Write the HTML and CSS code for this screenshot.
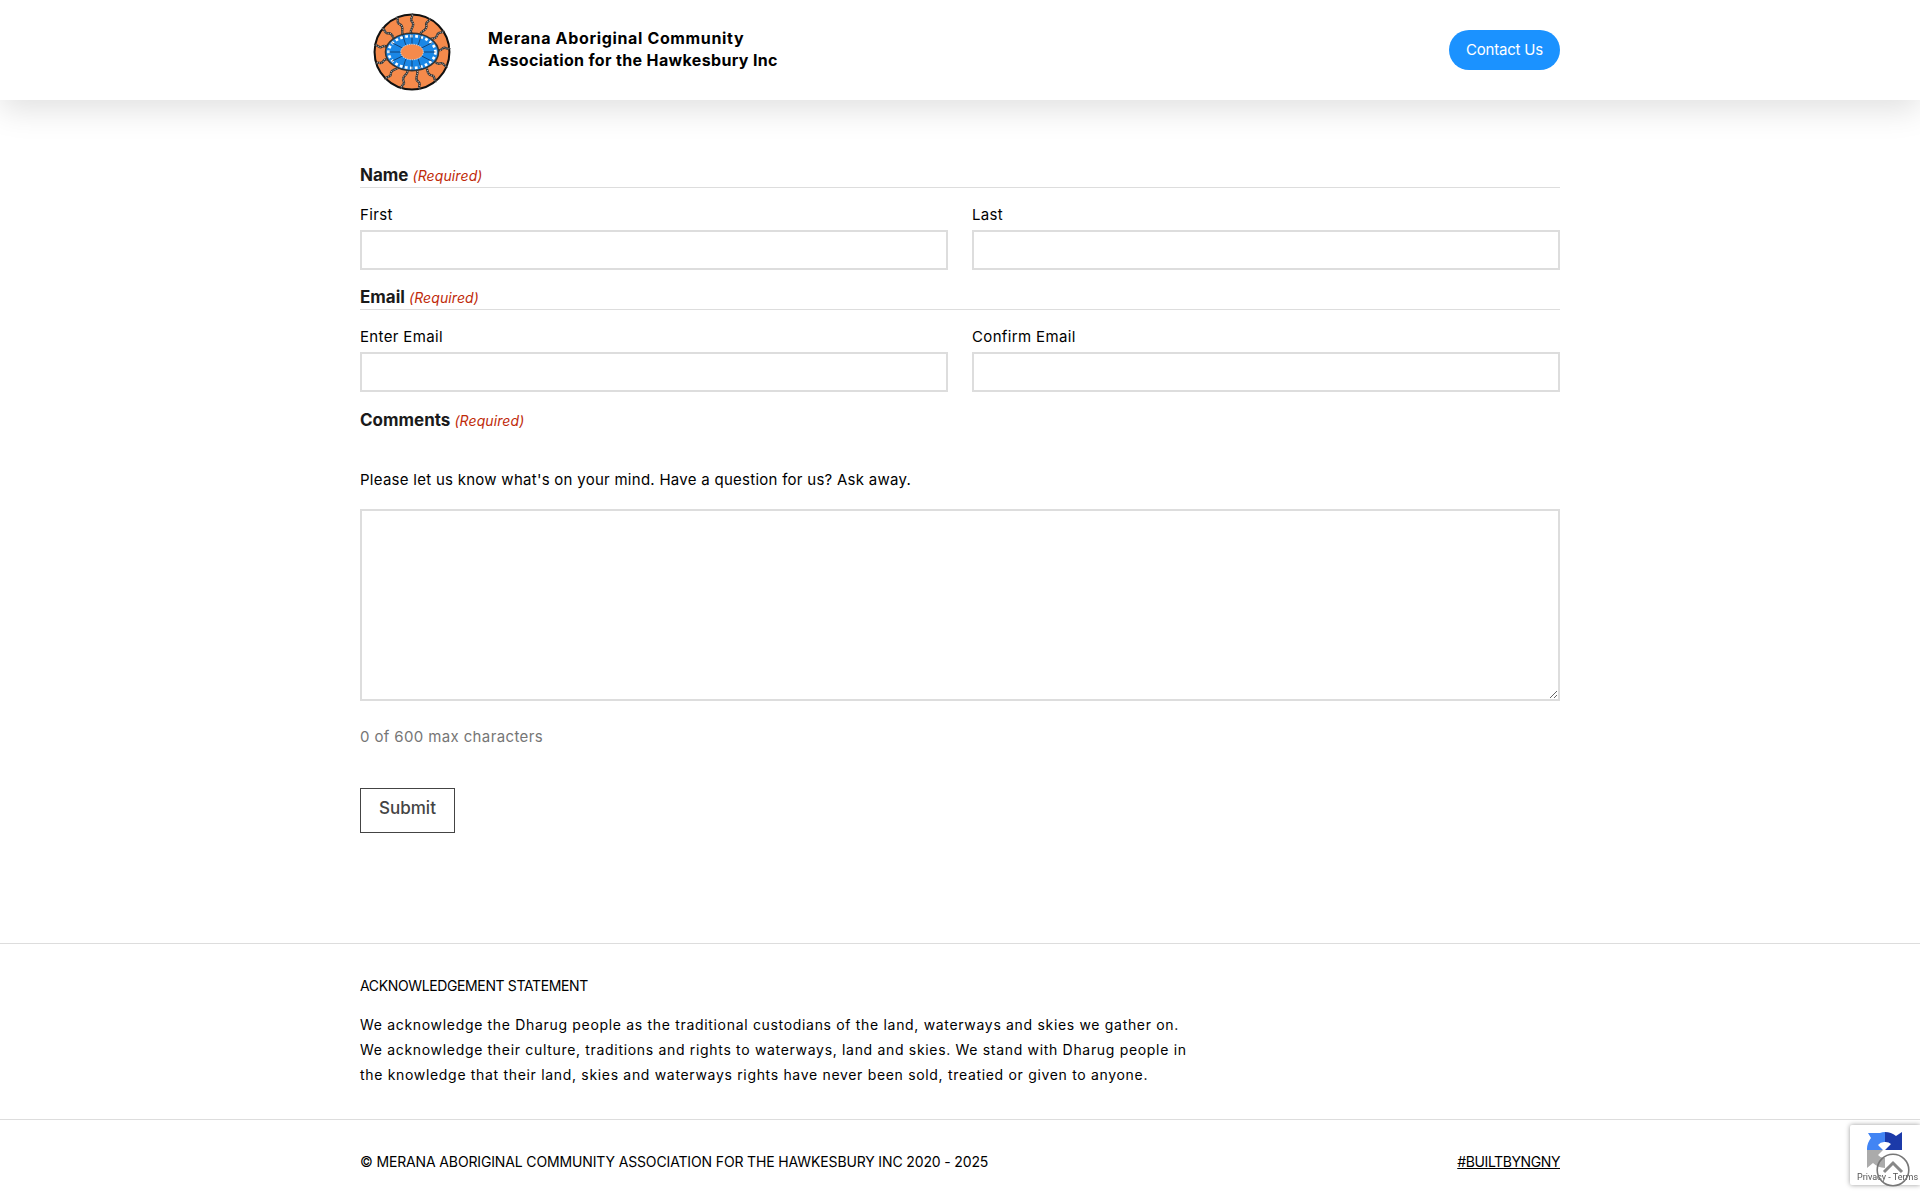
FILE: index.html
```html
<!DOCTYPE html>
<html lang="en">
<head>
<meta charset="utf-8">
<title>Contact Us</title>
<link rel="stylesheet" href="styles.css">
</head>
<body>
<header class="site-header">
  <div class="wrap header-row">
    <a class="brand" href="#">
      <svg class="logo" viewBox="0 0 100 100" aria-hidden="true">
        <defs>
          <g id="ray" fill="none">
            <path d="M50 27 C44 22 56 17 50 11 C46 7 53 5 50 1" stroke="#333" stroke-width="3"/>
            <path d="M50 27 C44 22 56 17 50 11 C46 7 53 5 50 1" stroke="#bbb" stroke-width="1.4" stroke-dasharray="1.2 1.6"/>
          </g>
        </defs>
        <circle cx="50" cy="50" r="48" fill="#f58a4b" stroke="#111" stroke-width="2.6"/>
        <g>
          <use href="#ray" transform="rotate(0 50 50)"/><use href="#ray" transform="rotate(28 50 50)"/>
          <use href="#ray" transform="rotate(56 50 50)"/><use href="#ray" transform="rotate(84 50 50)"/>
          <use href="#ray" transform="rotate(112 50 50)"/><use href="#ray" transform="rotate(140 50 50)"/>
          <use href="#ray" transform="rotate(168 50 50)"/><use href="#ray" transform="rotate(196 50 50)"/>
          <use href="#ray" transform="rotate(224 50 50)"/><use href="#ray" transform="rotate(252 50 50)"/>
          <use href="#ray" transform="rotate(280 50 50)"/><use href="#ray" transform="rotate(308 50 50)"/>
          <use href="#ray" transform="rotate(336 50 50)"/>
        </g>
        <ellipse cx="50" cy="50" rx="34" ry="24" fill="#1a87e6" stroke="#333" stroke-width="2"/>
        <ellipse cx="50" cy="50" rx="30" ry="20.5" fill="none" stroke="#fff" stroke-width="3.5" stroke-dasharray="3.5 3"/>
        <g stroke="#10325c" stroke-width="1">
          <path d="M50 26V40M62 28L58 41M38 28L42 41M76 38L62 45M24 38L38 45M80 50H64M20 50H36M76 62L62 55M24 62L38 55M62 72L58 59M38 72L42 59M50 74V60"/>
        </g>
        <ellipse cx="50" cy="50" rx="14.5" ry="10" fill="#f58a4b" stroke="#fff" stroke-width="1" stroke-dasharray="1.5 1.5"/>
      </svg>
      <span class="brand-name"><span class="brand-first">Merana Aboriginal Community</span><br>Association for the Hawkesbury Inc</span>
    </a>
    <a class="contact-btn" href="#">Contact Us</a>
  </div>
</header>

<main class="wrap form">
  <fieldset class="group">
    <legend class="legend">Name <em>(Required)</em></legend>
    <div class="pair">
      <label class="field">First<span class="input"></span></label>
      <label class="field">Last<span class="input"></span></label>
    </div>
  </fieldset>
  <fieldset class="group group-email">
    <legend class="legend">Email <em>(Required)</em></legend>
    <div class="pair">
      <label class="field">Enter Email<span class="input"></span></label>
      <label class="field">Confirm Email<span class="input"></span></label>
    </div>
  </fieldset>
  <div class="comments">
    <div class="legend plain">Comments <em>(Required)</em></div>
    <p class="hint">Please let us know what's on your mind. Have a question for us? Ask away.</p>
    <textarea class="area" aria-label="Comments"></textarea>
    <p class="count">0 of 600 max characters</p>
  </div>
  <button class="submit" type="button">Submit</button>
</main>

<footer>
  <section class="ack">
    <div class="wrap">
      <h2 class="ack-title">ACKNOWLEDGEMENT STATEMENT</h2>
      <p class="ack-text">We acknowledge the Dharug people as the traditional custodians of the land, waterways and skies we gather on. We acknowledge their culture, traditions and rights to waterways, land and skies. We stand with Dharug people in the knowledge that their land, skies and waterways rights have never been sold, treatied or given to anyone.</p>
    </div>
  </section>
  <section class="legal">
    <div class="wrap legal-row">
      <span class="copy">© MERANA ABORIGINAL COMMUNITY ASSOCIATION FOR THE HAWKESBURY INC 2020 - 2025</span>
      <a class="tag" href="#">#BUILTBYNGNY</a>
    </div>
  </section>
</footer>

<div class="recaptcha">
  <svg class="rc-icon" viewBox="0 0 36 36" aria-hidden="true">
    <path d="M18 0 A18 18 0 0 1 29 4 L35 0 L35 18 L18 18 L24 12 A8 8 0 0 0 18 10Z" fill="#1c3aa9"/>
    <path d="M18 0 L18 10 A8 8 0 0 0 11 13 L16 18 L0 18 A18 18 0 0 1 4 6 L1 1 L13 1 A18 18 0 0 1 18 0Z" fill="#4285f4"/>
    <path d="M0 18 L16 18 L11 23 A8 8 0 0 0 18 26 L18 36 A18 18 0 0 1 6 31 L0 36Z" fill="#ababab"/>
  </svg>
  <span class="rc-text">Privacy - Terms</span>
</div>
<a class="to-top" href="#" aria-label="Back to top">
  <svg viewBox="0 0 34 34" aria-hidden="true"><circle cx="17" cy="17" r="15.8" fill="none" stroke="#777" stroke-width="1.6"/><path d="M8 19 L17 10 L26 19" fill="none" stroke="#888" stroke-width="3"/></svg>
</a>
</body>
</html>
```

FILE: styles.css
```css
* { box-sizing: border-box; }
html, body { margin: 0; padding: 0; }
body { background: #fff; color: #000; font-family: Inter, "Open Sans", sans-serif; font-size: 15px; height: 1199px; overflow: hidden; }
a { color: inherit; }
.wrap { width: 1200px; margin: 0 auto; }

.site-header { height: 100px; background: #fff; box-shadow: 0 10px 30px rgba(0,0,0,.12); }
.header-row { display: flex; justify-content: space-between; align-items: flex-start; height: 100%; }
.brand { display: flex; align-items: flex-start; text-decoration: none; padding: 13px 0 0 13px; }
.logo { width: 78px; height: 78px; flex: none; }
.brand-name { margin: 14px 0 0 37px; font-size: 16px; line-height: 22px; font-weight: 700; color: #000; letter-spacing: .35px; }
.brand-first { letter-spacing: .65px; }
.contact-btn { margin-top: 30px; width: 111px; height: 40px; border-radius: 20px; background: #1b92ff; color: #fff; font-size: 15px; letter-spacing: -.2px; text-align: center; line-height: 40px; text-decoration: none; }

.form { padding-top: 62px; }
.group { border: 0; margin: 0 0 14px; padding: 0; min-width: 0; }
.legend { display: block; width: 100%; padding: 2px 0 0; font-size: 17px; line-height: 22px; font-weight: 700; color: #1a1a1a; border-bottom: 1px solid #ddd; }
.legend em { font-size: 14px; font-weight: 400; color: #c02b0a; letter-spacing: .1px; }
.legend.plain { border: 0; }
.pair { display: grid; grid-template-columns: 1fr 1fr; column-gap: 24px; padding-top: 16px; }
.field { display: block; font-size: 15px; line-height: 22px; letter-spacing: .35px; }
.input { display: block; height: 40px; margin-top: 4px; border: 2px solid #ddd; background: #fff; }
.comments { margin-top: 15px; }
.hint { margin: 36px 0 0; line-height: 24px; letter-spacing: .27px; }
.area { display: block; width: 100%; height: 192px; margin-top: 17px; border: 2px solid #ddd; background: #fff; padding: 8px; }
.count { margin: 25px 0 0; line-height: 22px; color: #767676; letter-spacing: .37px; }
.submit { display: block; margin-top: 40px; width: 95px; height: 45px; border: 1px solid #444; background: #fff; color: #444; font: 500 17px Inter, sans-serif; padding: 0 0 5px; }

footer { margin-top: 110px; font-size: 14px; }
.ack { border-top: 1px solid #ddd; height: 176px; padding-top: 32px; }
.ack-title { margin: 0; font-size: 14px; font-weight: 400; line-height: 20px; letter-spacing: -.37px; }
.ack-text { width: 830px; margin: 16px 0 0; line-height: 25px; letter-spacing: .68px; }
.legal { border-top: 1px solid #ddd; padding-top: 32px; }
.legal-row { display: flex; justify-content: space-between; line-height: 20px; }
.copy { letter-spacing: -.14px; }
.tag { letter-spacing: -.4px; }

.recaptcha { position: fixed; right: 0; top: 1125px; width: 70px; height: 60px; background: #fff; box-shadow: 0 0 5px rgba(0,0,0,.4); border-radius: 2px 0 0 2px; overflow: hidden; }
.rc-icon { position: absolute; left: 17px; top: 7px; width: 36px; height: 36px; }
.rc-text { position: absolute; left: 7px; top: 47px; font-size: 9px; line-height: 10px; color: #555; white-space: nowrap; font-family: Roboto, sans-serif; }
.to-top { position: fixed; left: 1876px; top: 1153px; width: 34px; height: 34px; display: block; }
.to-top svg { display: block; width: 34px; height: 34px; }
```
